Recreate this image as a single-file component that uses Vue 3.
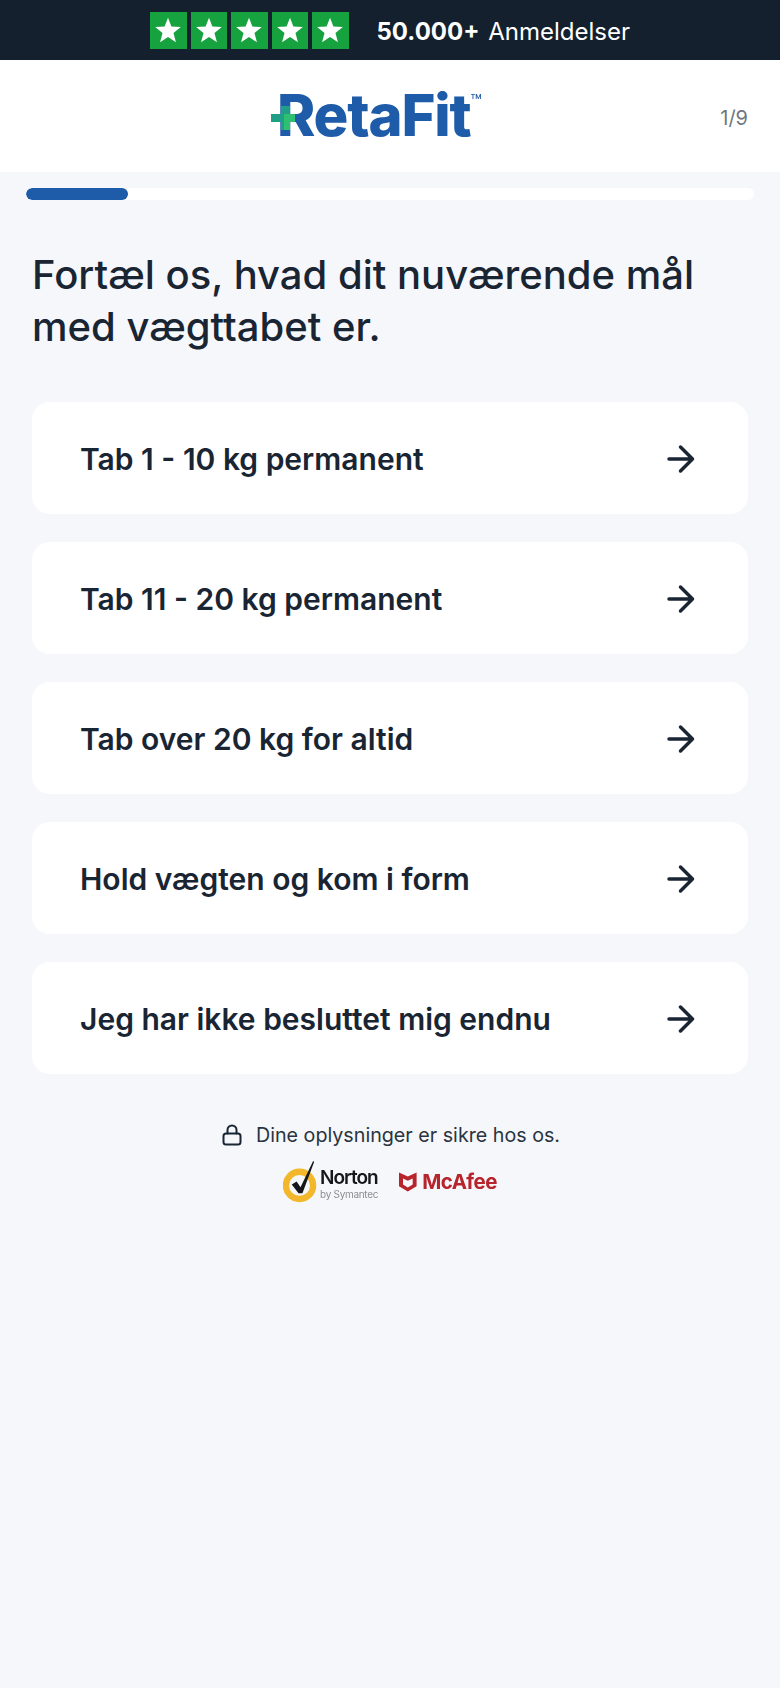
<template>
  <div class="page">
    <div class="review-bar">
      <div class="stars">
        <div v-for="n in 5" :key="n" class="star-box">
          <svg viewBox="0 0 24 24" width="28" height="28"><path d="M12 1.500l2.900 7.600 8.100.4-6.300 5.100 2.100 7.900-6.800-4.500-6.800 4.500 2.100-7.900L1 9.500l8.100-.4z" fill="#fff" /></svg>
        </div>
      </div>
      <div class="review-text"><b>50.000+</b> Anmeldelser</div>
    </div>

    <header class="logo-bar">
      <div class="logo">
        <span class="logo-name">RetaFit</span>
        <span class="logo-tm">™</span>
        <svg class="logo-plus" viewBox="0 0 24 24" width="24" height="24">
          <path d="M10 0h9v8h5v8h-5v8h-9v-8H0V8h10z" fill="#1f9f85" />
          <path d="M13 8h11v8h-5v8h-6z" fill="#2fbf71" />
        </svg>
      </div>
      <span class="step">1/9</span>
    </header>

    <div class="progress"><div class="progress-fill"></div></div>

    <main class="content">
      <h1>Fortæl os, hvad dit nuværende mål med vægttabet er.</h1>

      <div class="options">
        <div v-for="opt in options" :key="opt" class="option">
          <span>{{ opt }}</span>
          <svg class="arrow" viewBox="0 0 32 32" width="32" height="32" fill="none" stroke="#1a2533" stroke-width="3.500" stroke-linecap="round" stroke-linejoin="round">
            <path d="M5 16h23.500M16.500 4l12 12-12 12" />
          </svg>
        </div>
      </div>

      <div class="secure">
        <svg viewBox="0 0 24 24" width="24" height="24" fill="none" stroke="#1a2533" stroke-width="2" stroke-linecap="round" stroke-linejoin="round">
          <rect x="3.500" y="10.500" width="17" height="11" rx="2.500" />
          <path d="M7.500 10.500V7a4.500 4.500 0 0 1 9 0v3.500" />
        </svg>
        <span>Dine oplysninger er sikre hos os.</span>
      </div>

      <div class="badges">
        <div class="norton">
          <svg viewBox="0 0 36 44" width="35" height="43">
            <circle cx="17" cy="26" r="14" fill="none" stroke="#f3b72c" stroke-width="6.500" />
            <path d="M9 25l5-3 4 6L31 1l1 1-12 32h-4z" fill="#15171b" />
          </svg>
          <div class="norton-text">
            <span class="norton-name">Norton</span>
            <span class="norton-sub">by Symantec</span>
          </div>
        </div>
        <div class="mcafee">
          <svg viewBox="0 0 20 22" width="20" height="22">
            <path d="M1 1.500l8.800 4 8.800-4v13.700l-8.800 5.300L1 15.200z" fill="#b8242c" />
            <path d="M5 7.500l4.800 2.200 4.900-2.200v6l-4.900 3-4.800-3z" fill="#f5f7fb" />
          </svg>
          <span>McAfee</span>
        </div>
      </div>
    </main>
  </div>
</template>

<script setup>
const options = [
  'Tab 1 - 10 kg permanent',
  'Tab 11 - 20 kg permanent',
  'Tab over 20 kg for altid',
  'Hold vægten og kom i form',
  'Jeg har ikke besluttet mig endnu'
];
</script>

<style>
body {
  background: #f5f7fb;
}
</style>

<style scoped>
.page {
  min-height: 1688px;
  background: #f5f7fb;
  font-family: Inter, "Liberation Sans", sans-serif;
  color: #1a2533;
}

.review-bar {
  height: 60px;
  background: #15202e;
  display: flex;
  align-items: center;
  justify-content: center;
  gap: 28px;
}

.stars {
  display: flex;
  gap: 4px;
}

.star-box {
  width: 36.500px;
  height: 37px;
  background: #16a23f;
  display: flex;
  align-items: center;
  justify-content: center;
}

.review-text {
  color: #fff;
  font-size: 24px;
  word-spacing: 2px;
  padding-top: 2px;
}

.review-text b {
  font-weight: 700;
}

.logo-bar {
  height: 112px;
  background: #fff;
  display: flex;
  align-items: center;
  justify-content: center;
  position: relative;
}

.logo {
  position: relative;
  display: flex;
  align-items: flex-start;
  color: #1e5ba8;
  margin-right: 21px;
  margin-bottom: 2px;
  filter: blur(0.3px);
}

.logo-name {
  font-size: 58px;
  font-weight: 800;
  letter-spacing: -1.200px;
  line-height: 72px;
}

.logo-plus {
  position: absolute;
  left: -6px;
  top: 27px;
}

.logo-tm {
  font-size: 19px;
  line-height: 20px;
  margin-top: 13px;
}

.step {
  position: absolute;
  right: 32px;
  top: 46px;
  font-size: 20px;
  color: #6f7880;
}

.progress {
  margin: 16px 26px 0;
  height: 12px;
  border-radius: 6px;
  background: #fff;
  overflow: hidden;
}

.progress-fill {
  width: 102px;
  height: 100%;
  background: #1e5ba8;
  border-radius: 6px;
}

.content {
  padding: 49px 32px 0;
}

h1 {
  margin: 0;
  font-size: 40px;
  line-height: 52px;
  font-weight: 500;
}

.options {
  margin-top: 49px;
  display: flex;
  flex-direction: column;
  gap: 28px;
}

.option {
  height: 112px;
  background: #fff;
  border-radius: 18px;
  padding: 0 52px 0 48px;
  display: flex;
  align-items: center;
  justify-content: space-between;
  font-size: 30px;
  font-weight: 600;
}

.option span {
  padding-top: 1px;
}

.arrow {
  margin-top: 2px;
}

.secure {
  margin-top: 49px;
  display: flex;
  align-items: center;
  justify-content: center;
  gap: 12px;
  font-size: 19.700px;
  color: #2a3440;
}

.badges {
  margin-top: 13px;
  display: flex;
  justify-content: center;
  align-items: center;
  gap: 20px;
  filter: blur(0.5px);
}

.norton {
  display: flex;
  align-items: center;
}

.norton-text {
  display: flex;
  flex-direction: column;
  margin-left: 2px;
  margin-top: 4px;
}

.norton-name {
  font-size: 19px;
  font-weight: 600;
  letter-spacing: -1px;
  line-height: 20px;
  color: #15171b;
}

.norton-sub {
  font-size: 10px;
  line-height: 12px;
  color: #8a8d92;
  letter-spacing: -0.3px;
}

.mcafee {
  display: flex;
  align-items: center;
  gap: 4px;
  color: #b8242c;
  font-size: 20.500px;
  font-weight: 700;
  letter-spacing: -0.5px;
}
</style>
